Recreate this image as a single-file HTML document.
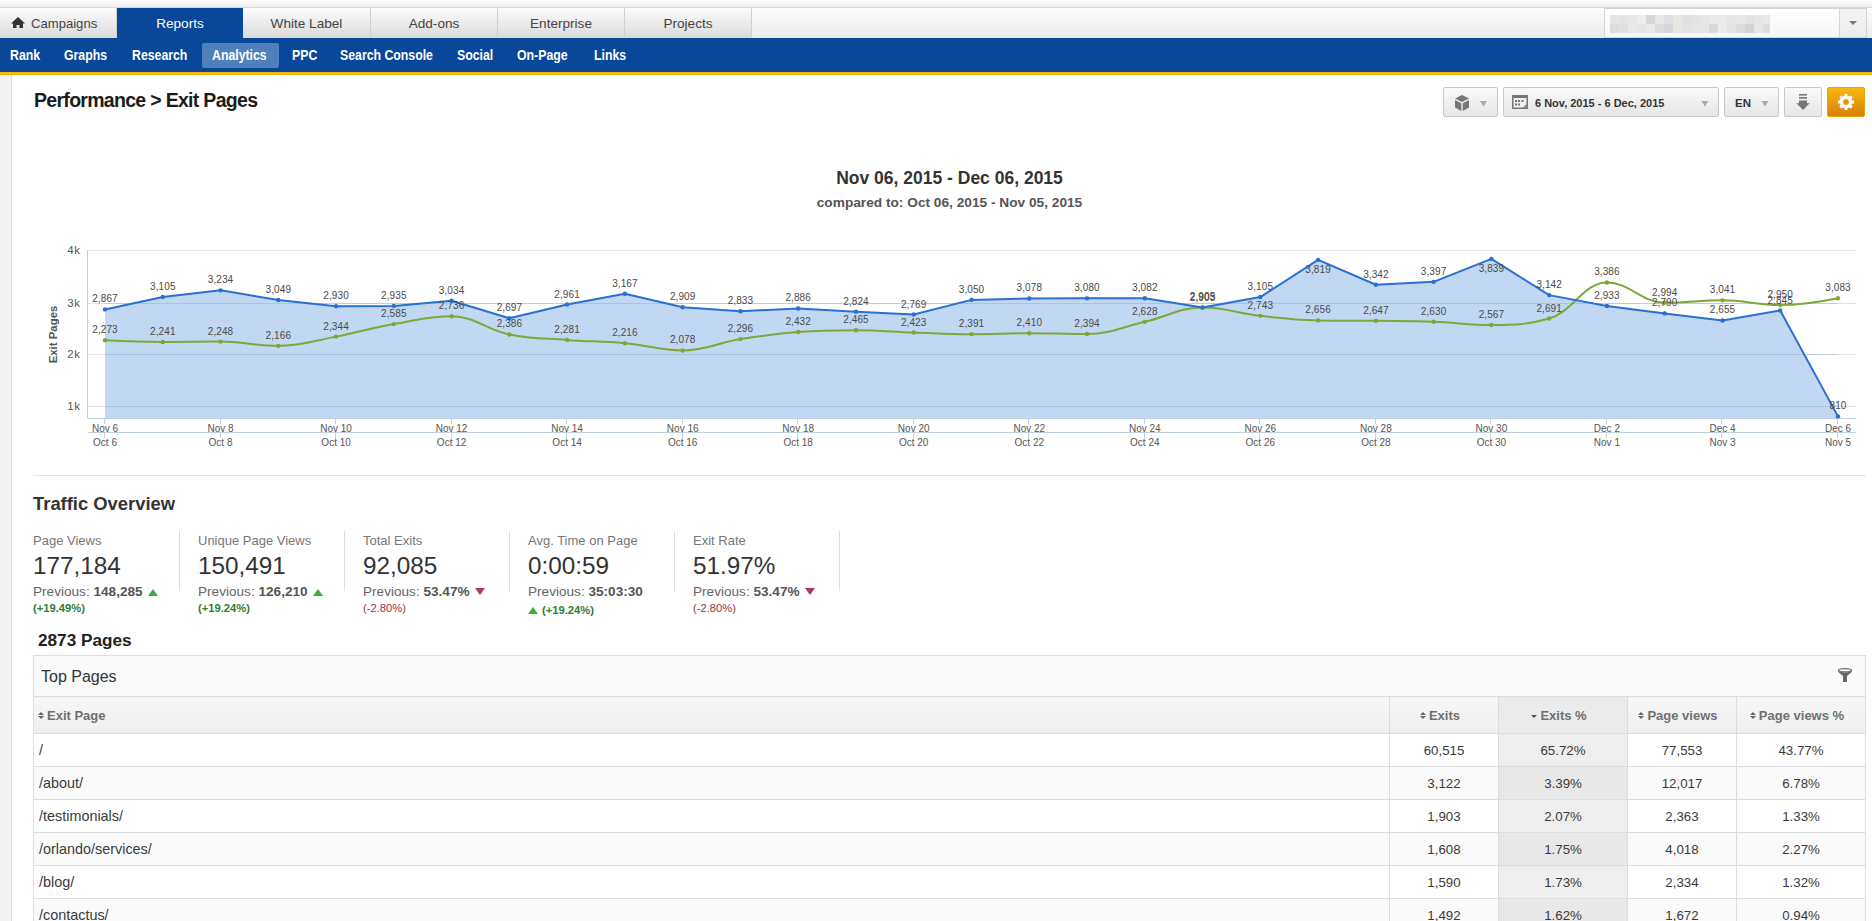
<!DOCTYPE html>
<html><head><meta charset="utf-8">
<style>
*{box-sizing:border-box;margin:0;padding:0}
html,body{width:1872px;height:921px;overflow:hidden;background:#fff;font-family:"Liberation Sans",sans-serif;position:relative}
.abs{position:absolute}
#topstrip{left:0;top:0;width:1872px;height:8px;background:linear-gradient(#fdfdfd,#ededed);border-bottom:1px solid #dcdcdc}
.tab{position:absolute;top:8px;height:30px;background:linear-gradient(#fdfdfd,#dadada);border-right:1px solid #d0d0d0;color:#444;font-size:13.6px;line-height:31px;text-align:center}
.tab.on{background:#084799;color:#fff;border-right:none}
#rightstrip{left:751px;top:8px;width:1121px;height:30px;background:linear-gradient(#fdfdfd,#ebebeb)}
#nav{left:0;top:38px;width:1872px;height:34px;background:#084799}
#yel{left:0;top:72px;width:1872px;height:3px;background:#f7b50d}
.sn{position:absolute;top:43px;height:24px;line-height:24px;color:#fff;font-size:15px;font-weight:bold;transform:scaleX(0.82);transform-origin:0 0;white-space:nowrap}
#leftpanel{left:0;top:75px;width:12px;height:846px;background:#f2f2f2;border-right:1px solid #dcdcdc}
.btn{position:absolute;top:87px;height:30px;border:1px solid #c8c8c8;border-radius:2px;background:linear-gradient(#fafafa,#e6e6e6)}
.stat{position:absolute;top:530px;width:165px}
.stat .l{position:absolute;left:0;top:3px;font-size:13px;color:#777;white-space:nowrap}
.stat .v{position:absolute;left:0;top:22px;font-size:24.3px;color:#333;white-space:nowrap}
.stat .p{position:absolute;left:0;top:54px;font-size:13.6px;color:#666;white-space:nowrap}
.stat .p b{color:#555}
.stat .c{position:absolute;left:0;top:72px;font-size:11.2px;white-space:nowrap}
.vsep{position:absolute;top:531px;width:1px;height:60px;background:#ddd}
.up{display:inline-block;width:0;height:0;border-left:5px solid transparent;border-right:5px solid transparent;border-bottom:7px solid #3aae3a;margin-left:5px;vertical-align:0px}
.dn{display:inline-block;width:0;height:0;border-left:5px solid transparent;border-right:5px solid transparent;border-top:7px solid #b03858;margin-left:5px;vertical-align:1px}
table{position:absolute;left:33px;top:696px;border-collapse:collapse;font-size:13.3px;color:#3a3a3a}
td,th{border:1px solid #ddd;height:33px;padding:0;text-align:center}
th{height:37px;background:linear-gradient(#f7f7f7,#efefef);color:#707070;font-weight:bold;font-size:13px;padding-right:8px}
td.l,th.l{text-align:left;padding-left:5px;padding-right:0}
td.l{font-size:14.4px}
td.s{background:#eee}
tr:nth-child(odd) td{background:#fafafa}
tr:nth-child(odd) td.s{background:#e8e8e8}
th.s{background:#ebebeb}
.caret{display:inline-block;width:0;height:0;border-left:3.5px solid transparent;border-right:3.5px solid transparent;border-top:3.5px solid #555;margin-right:3px;vertical-align:2px}
.sort{display:inline-block;position:relative;width:6px;height:8px;margin-right:3px;vertical-align:0px}
.sort:before{content:"";position:absolute;left:0;top:0;border-left:3px solid transparent;border-right:3px solid transparent;border-bottom:3.5px solid #666}
.sort:after{content:"";position:absolute;left:0;top:4.5px;border-left:3px solid transparent;border-right:3px solid transparent;border-top:3.5px solid #666}
</style></head><body>
<div id="topstrip" class="abs"></div>
<div id="rightstrip" class="abs"></div>
<div class="tab" style="left:0;width:117px"><span style="position:absolute;left:11px;top:9px;width:14px;height:12px;line-height:0">
<svg style="display:block" width="14" height="12" viewBox="0 0 14 12"><path d="M7 0 L14 6.5 L12 6.5 L12 11 L8.5 11 L8.5 8 L5.5 8 L5.5 11 L2 11 L2 6.5 L0 6.5 Z" fill="#333"/></svg></span><span style="position:absolute;left:31px;font-size:13.1px">Campaigns</span></div>
<div class="tab on" style="left:117px;width:126px">Reports</div>
<div class="tab" style="left:243px;width:128px">White Label</div>
<div class="tab" style="left:371px;width:127px">Add-ons</div>
<div class="tab" style="left:498px;width:127px">Enterprise</div>
<div class="tab" style="left:625px;width:127px">Projects</div>
<div class="abs" style="left:1604px;top:8px;width:263px;height:30px;border:1px solid #d4d4d4;background:linear-gradient(#fff,#f6f6f6)"></div>
<div class="abs" style="left:1839px;top:9px;width:27px;height:28px;border-left:1px solid #d8d8d8;background:linear-gradient(#f4f4f4,#ececec)"></div>
<div class="abs" style="left:1849px;top:21px;width:0;height:0;border-left:4px solid transparent;border-right:4px solid transparent;border-top:4px solid #777"></div>
<svg class="abs" style="left:1610px;top:15px" width="160" height="18" viewBox="1610 15 160 18"><rect x="1610" y="15" width="9" height="9" fill="#e6e6e4"/><rect x="1610" y="24" width="9" height="9" fill="#dcdcdc"/><rect x="1619" y="15" width="9" height="9" fill="#e3e3e3"/><rect x="1619" y="24" width="9" height="9" fill="#e0e0e2"/><rect x="1628" y="15" width="9" height="9" fill="#e6e6e6"/><rect x="1628" y="24" width="9" height="9" fill="#e8e8e8"/><rect x="1637" y="15" width="9" height="9" fill="#ebecee"/><rect x="1637" y="24" width="9" height="9" fill="#e4e5e7"/><rect x="1646" y="15" width="9" height="9" fill="#d6d6d6"/><rect x="1646" y="24" width="9" height="9" fill="#e8e8e8"/><rect x="1655" y="15" width="9" height="9" fill="#e9e7e4"/><rect x="1655" y="24" width="9" height="9" fill="#dcdcda"/><rect x="1664" y="15" width="9" height="9" fill="#dfdee3"/><rect x="1664" y="24" width="9" height="9" fill="#d6d7db"/><rect x="1673" y="15" width="9" height="9" fill="#e7e6e3"/><rect x="1673" y="24" width="9" height="9" fill="#e6e5e3"/><rect x="1682" y="15" width="9" height="9" fill="#dfdfdd"/><rect x="1682" y="24" width="9" height="9" fill="#e3e2e0"/><rect x="1691" y="15" width="9" height="9" fill="#e2e3e1"/><rect x="1691" y="24" width="9" height="9" fill="#e3e4e6"/><rect x="1700" y="15" width="9" height="9" fill="#e6e5e3"/><rect x="1700" y="24" width="9" height="9" fill="#e6e5e3"/><rect x="1709" y="15" width="9" height="9" fill="#e9e9e9"/><rect x="1709" y="24" width="9" height="9" fill="#d9d9d9"/><rect x="1718" y="15" width="9" height="9" fill="#e9eaec"/><rect x="1718" y="24" width="9" height="9" fill="#eceeed"/><rect x="1727" y="15" width="9" height="9" fill="#e5e5e6"/><rect x="1727" y="24" width="9" height="9" fill="#e2e3e5"/><rect x="1736" y="15" width="9" height="9" fill="#e8e8e8"/><rect x="1736" y="24" width="9" height="9" fill="#dddcd8"/><rect x="1745" y="15" width="9" height="9" fill="#e2e2e2"/><rect x="1745" y="24" width="9" height="9" fill="#d1d3d6"/><rect x="1754" y="15" width="9" height="9" fill="#e5e5e3"/><rect x="1754" y="24" width="9" height="9" fill="#e7e5e6"/><rect x="1763" y="15" width="7" height="9" fill="#e7e8ea"/><rect x="1763" y="24" width="7" height="9" fill="#dbdcde"/></svg>
<div id="nav" class="abs"></div>
<div class="abs" style="left:202px;top:43px;width:77px;height:25px;background:#5080bb;border-radius:2px"></div>
<div class="sn" style="left:10px">Rank</div>
<div class="sn" style="left:64px">Graphs</div>
<div class="sn" style="left:132px">Research</div>
<div class="sn" style="left:212px">Analytics</div>
<div class="sn" style="left:292px">PPC</div>
<div class="sn" style="left:340px">Search Console</div>
<div class="sn" style="left:457px">Social</div>
<div class="sn" style="left:517px">On-Page</div>
<div class="sn" style="left:594px">Links</div>
<div id="yel" class="abs"></div>
<div id="leftpanel" class="abs"></div>

<div class="abs" style="left:34px;top:89px;font-size:19.5px;letter-spacing:-0.7px;font-weight:bold;color:#1c1c1c;white-space:nowrap">Performance &gt; Exit Pages</div>

<div class="btn" style="left:1443px;width:55px"></div>
<div class="btn" style="left:1503px;width:216px"></div>
<div class="btn" style="left:1724px;width:55px"></div>
<div class="btn" style="left:1784px;width:38px"></div>
<div class="btn" style="left:1827px;width:38px;border-color:#e8a400;background:linear-gradient(#f8b80e,#d8800a)"></div>
<svg class="abs" style="left:1440px;top:84px" width="432" height="36" viewBox="1440 84 432 36">
<path d="M1462 95 L1469 98.5 L1462 102 L1455 98.5 Z" fill="#777"/>
<path d="M1455 100 L1461.3 103.3 L1461.3 111 L1455 107.5 Z" fill="#777"/>
<path d="M1469 100 L1462.7 103.3 L1462.7 111 L1469 107.5 Z" fill="#777"/>
<path d="M1480 101 L1487 101 L1483.5 106.5 Z" fill="#aaa"/>
<rect x="1512" y="95" width="16" height="14" fill="#777"/>
<rect x="1513.5" y="98" width="13" height="9.5" fill="#f0f0f0"/>
<rect x="1515" y="100" width="2" height="2" fill="#777"/><rect x="1518" y="100" width="2" height="2" fill="#777"/><rect x="1521.5" y="100" width="2" height="2" fill="#777"/>
<rect x="1515" y="103.5" width="2" height="2" fill="#777"/><rect x="1518" y="103.5" width="2" height="2" fill="#777"/>
<path d="M1523 107.5 L1526.5 104 L1526.5 107.5 Z" fill="#777"/>
<path d="M1701.5 101 L1708.5 101 L1705 106.5 Z" fill="#aaa"/>
<path d="M1761.5 101 L1768.5 101 L1765 106.5 Z" fill="#aaa"/>
<rect x="1799" y="94" width="8" height="1.6" fill="#777"/>
<rect x="1799" y="97.1" width="8" height="1.6" fill="#777"/>
<path d="M1799 100.5 L1807 100.5 L1807 103.2 L1809.7 103.2 L1803 110 L1796.3 103.2 L1799 103.2 Z" fill="#777"/>
<g transform="translate(1846 102)" fill="#fff">
<circle r="6.3"/>
<g id="teeth"><rect x="-1.5" y="-8" width="3" height="3.5"/><rect x="-1.5" y="4.5" width="3" height="3.5"/><rect x="-8" y="-1.5" width="3.5" height="3"/><rect x="4.5" y="-1.5" width="3.5" height="3"/></g>
<g transform="rotate(45)"><rect x="-1.5" y="-8" width="3" height="3.5"/><rect x="-1.5" y="4.5" width="3" height="3.5"/><rect x="-8" y="-1.5" width="3.5" height="3"/><rect x="4.5" y="-1.5" width="3.5" height="3"/></g>
<circle r="2.9" fill="#e49a08"/>
</g>
</svg>
<div class="abs" style="left:1535px;top:97px;font-size:11px;font-weight:bold;color:#333;white-space:nowrap">6 Nov, 2015 - 6 Dec, 2015</div>
<div class="abs" style="left:1735px;top:97px;font-size:11.5px;font-weight:bold;color:#333">EN</div>

<div class="abs" style="left:0;top:168px;width:1899px;text-align:center;font-size:17.5px;font-weight:bold;color:#333">Nov 06, 2015 - Dec 06, 2015</div>
<div class="abs" style="left:0;top:195px;width:1899px;text-align:center;font-size:13.7px;font-weight:bold;color:#555">compared to: Oct 06, 2015 - Nov 05, 2015</div>

<svg width="1872" height="921" style="position:absolute;left:0;top:0">
<line x1="88" y1="250.5" x2="1856" y2="250.5" stroke="#e2e2e2" stroke-width="1"/>
<line x1="88" y1="303.5" x2="1856" y2="303.5" stroke="#e2e2e2" stroke-width="1"/>
<line x1="88" y1="354.5" x2="1856" y2="354.5" stroke="#e2e2e2" stroke-width="1"/>
<line x1="88" y1="406.5" x2="1856" y2="406.5" stroke="#e2e2e2" stroke-width="1"/>
<path d="M 105.00 418 L 105.00 309.42 L 162.77 297.04 L 220.53 290.33 L 278.30 299.95 L 336.07 306.14 L 393.83 305.88 L 451.60 300.73 L 509.37 318.26 L 567.13 304.53 L 624.90 293.82 L 682.67 307.23 L 740.43 311.18 L 798.20 308.43 L 855.97 311.65 L 913.73 314.51 L 971.50 299.90 L 1029.27 298.44 L 1087.03 298.34 L 1144.80 298.24 L 1202.57 307.44 L 1260.33 297.04 L 1318.10 259.91 L 1375.87 284.72 L 1433.63 281.86 L 1491.40 258.87 L 1549.17 295.12 L 1606.93 305.98 L 1664.70 313.42 L 1722.47 320.44 L 1780.23 310.56 L 1838.00 416.38 L 1838.00 418 Z" fill="#a8c8ec" fill-opacity="0.7"/>
<line x1="105" y1="303.5" x2="1838" y2="303.5" stroke="#9bb3cf" stroke-width="1" stroke-opacity="0.45"/>
<line x1="105" y1="354.5" x2="1838" y2="354.5" stroke="#9bb3cf" stroke-width="1" stroke-opacity="0.45"/>
<line x1="105" y1="406.5" x2="1838" y2="406.5" stroke="#9bb3cf" stroke-width="1" stroke-opacity="0.45"/>
<line x1="87.5" y1="250" x2="87.5" y2="418.5" stroke="#c0d0e0" stroke-width="1"/>
<line x1="88" y1="418.5" x2="1856" y2="418.5" stroke="#c0d0e0" stroke-width="1"/>
<line x1="88" y1="432.5" x2="1856" y2="432.5" stroke="#c0d0e0" stroke-width="1"/>
<line x1="104.5" y1="419" x2="104.5" y2="424" stroke="#c0d0e0"/>
<line x1="104.5" y1="433" x2="104.5" y2="438" stroke="#c0d0e0"/>
<line x1="220.5" y1="419" x2="220.5" y2="424" stroke="#c0d0e0"/>
<line x1="220.5" y1="433" x2="220.5" y2="438" stroke="#c0d0e0"/>
<line x1="335.5" y1="419" x2="335.5" y2="424" stroke="#c0d0e0"/>
<line x1="335.5" y1="433" x2="335.5" y2="438" stroke="#c0d0e0"/>
<line x1="451.5" y1="419" x2="451.5" y2="424" stroke="#c0d0e0"/>
<line x1="451.5" y1="433" x2="451.5" y2="438" stroke="#c0d0e0"/>
<line x1="566.5" y1="419" x2="566.5" y2="424" stroke="#c0d0e0"/>
<line x1="566.5" y1="433" x2="566.5" y2="438" stroke="#c0d0e0"/>
<line x1="682.5" y1="419" x2="682.5" y2="424" stroke="#c0d0e0"/>
<line x1="682.5" y1="433" x2="682.5" y2="438" stroke="#c0d0e0"/>
<line x1="797.5" y1="419" x2="797.5" y2="424" stroke="#c0d0e0"/>
<line x1="797.5" y1="433" x2="797.5" y2="438" stroke="#c0d0e0"/>
<line x1="913.5" y1="419" x2="913.5" y2="424" stroke="#c0d0e0"/>
<line x1="913.5" y1="433" x2="913.5" y2="438" stroke="#c0d0e0"/>
<line x1="1028.5" y1="419" x2="1028.5" y2="424" stroke="#c0d0e0"/>
<line x1="1028.5" y1="433" x2="1028.5" y2="438" stroke="#c0d0e0"/>
<line x1="1144.5" y1="419" x2="1144.5" y2="424" stroke="#c0d0e0"/>
<line x1="1144.5" y1="433" x2="1144.5" y2="438" stroke="#c0d0e0"/>
<line x1="1259.5" y1="419" x2="1259.5" y2="424" stroke="#c0d0e0"/>
<line x1="1259.5" y1="433" x2="1259.5" y2="438" stroke="#c0d0e0"/>
<line x1="1375.5" y1="419" x2="1375.5" y2="424" stroke="#c0d0e0"/>
<line x1="1375.5" y1="433" x2="1375.5" y2="438" stroke="#c0d0e0"/>
<line x1="1490.5" y1="419" x2="1490.5" y2="424" stroke="#c0d0e0"/>
<line x1="1490.5" y1="433" x2="1490.5" y2="438" stroke="#c0d0e0"/>
<line x1="1606.5" y1="419" x2="1606.5" y2="424" stroke="#c0d0e0"/>
<line x1="1606.5" y1="433" x2="1606.5" y2="438" stroke="#c0d0e0"/>
<line x1="1721.5" y1="419" x2="1721.5" y2="424" stroke="#c0d0e0"/>
<line x1="1721.5" y1="433" x2="1721.5" y2="438" stroke="#c0d0e0"/>
<line x1="1837.5" y1="419" x2="1837.5" y2="424" stroke="#c0d0e0"/>
<line x1="1837.5" y1="433" x2="1837.5" y2="438" stroke="#c0d0e0"/>
<path d="M 105.00 340.30 C 105.00 340.30 139.66 341.97 162.77 341.97 C 185.87 341.97 197.43 341.60 220.53 341.60 C 243.64 341.60 255.19 345.87 278.30 345.87 C 301.41 345.87 312.96 340.97 336.07 336.61 C 359.17 332.25 370.73 328.16 393.83 324.08 C 416.94 320.00 428.49 316.23 451.60 316.23 C 474.71 316.23 486.26 329.70 509.37 334.43 C 532.47 339.16 544.03 338.12 567.13 339.89 C 590.24 341.66 601.79 341.16 624.90 343.27 C 648.01 345.38 659.56 350.44 682.67 350.44 C 705.77 350.44 717.33 342.79 740.43 339.11 C 763.54 335.43 775.09 333.75 798.20 332.04 C 821.31 330.32 832.86 330.32 855.97 330.32 C 879.07 330.32 890.63 331.73 913.73 332.50 C 936.84 333.27 948.39 334.17 971.50 334.17 C 994.61 334.17 1006.16 333.18 1029.27 333.18 C 1052.37 333.18 1063.93 334.01 1087.03 334.01 C 1110.14 334.01 1121.69 327.14 1144.80 321.84 C 1167.91 316.55 1179.46 307.54 1202.57 307.54 C 1225.67 307.54 1237.23 313.30 1260.33 315.86 C 1283.44 318.43 1294.99 319.92 1318.10 320.39 C 1341.21 320.86 1352.76 320.59 1375.87 320.86 C 1398.97 321.13 1410.53 320.91 1433.63 321.74 C 1456.74 322.57 1468.29 325.02 1491.40 325.02 C 1514.51 325.02 1526.06 325.02 1549.17 318.57 C 1572.27 312.12 1583.83 282.43 1606.93 282.43 C 1630.04 282.43 1641.59 302.81 1664.70 302.81 C 1687.81 302.81 1699.36 300.37 1722.47 300.37 C 1745.57 300.37 1757.13 305.10 1780.23 305.10 C 1803.34 305.10 1838.00 298.18 1838.00 298.18" fill="none" stroke="#7ba83a" stroke-width="2"/>
<path d="M 105.00 309.42 L 162.77 297.04 L 220.53 290.33 L 278.30 299.95 L 336.07 306.14 L 393.83 305.88 L 451.60 300.73 L 509.37 318.26 L 567.13 304.53 L 624.90 293.82 L 682.67 307.23 L 740.43 311.18 L 798.20 308.43 L 855.97 311.65 L 913.73 314.51 L 971.50 299.90 L 1029.27 298.44 L 1087.03 298.34 L 1144.80 298.24 L 1202.57 307.44 L 1260.33 297.04 L 1318.10 259.91 L 1375.87 284.72 L 1433.63 281.86 L 1491.40 258.87 L 1549.17 295.12 L 1606.93 305.98 L 1664.70 313.42 L 1722.47 320.44 L 1780.23 310.56 L 1838.00 416.38" fill="none" stroke="#2870d2" stroke-width="2" stroke-linejoin="round"/>
<circle cx="105.00" cy="340.30" r="2.2" fill="#7ba83a"/>
<circle cx="162.77" cy="341.97" r="2.2" fill="#7ba83a"/>
<circle cx="220.53" cy="341.60" r="2.2" fill="#7ba83a"/>
<circle cx="278.30" cy="345.87" r="2.2" fill="#7ba83a"/>
<circle cx="336.07" cy="336.61" r="2.2" fill="#7ba83a"/>
<circle cx="393.83" cy="324.08" r="2.2" fill="#7ba83a"/>
<circle cx="451.60" cy="316.23" r="2.2" fill="#7ba83a"/>
<circle cx="509.37" cy="334.43" r="2.2" fill="#7ba83a"/>
<circle cx="567.13" cy="339.89" r="2.2" fill="#7ba83a"/>
<circle cx="624.90" cy="343.27" r="2.2" fill="#7ba83a"/>
<circle cx="682.67" cy="350.44" r="2.2" fill="#7ba83a"/>
<circle cx="740.43" cy="339.11" r="2.2" fill="#7ba83a"/>
<circle cx="798.20" cy="332.04" r="2.2" fill="#7ba83a"/>
<circle cx="855.97" cy="330.32" r="2.2" fill="#7ba83a"/>
<circle cx="913.73" cy="332.50" r="2.2" fill="#7ba83a"/>
<circle cx="971.50" cy="334.17" r="2.2" fill="#7ba83a"/>
<circle cx="1029.27" cy="333.18" r="2.2" fill="#7ba83a"/>
<circle cx="1087.03" cy="334.01" r="2.2" fill="#7ba83a"/>
<circle cx="1144.80" cy="321.84" r="2.2" fill="#7ba83a"/>
<circle cx="1202.57" cy="307.54" r="2.2" fill="#7ba83a"/>
<circle cx="1260.33" cy="315.86" r="2.2" fill="#7ba83a"/>
<circle cx="1318.10" cy="320.39" r="2.2" fill="#7ba83a"/>
<circle cx="1375.87" cy="320.86" r="2.2" fill="#7ba83a"/>
<circle cx="1433.63" cy="321.74" r="2.2" fill="#7ba83a"/>
<circle cx="1491.40" cy="325.02" r="2.2" fill="#7ba83a"/>
<circle cx="1549.17" cy="318.57" r="2.2" fill="#7ba83a"/>
<circle cx="1606.93" cy="282.43" r="2.2" fill="#7ba83a"/>
<circle cx="1664.70" cy="302.81" r="2.2" fill="#7ba83a"/>
<circle cx="1722.47" cy="300.37" r="2.2" fill="#7ba83a"/>
<circle cx="1780.23" cy="305.10" r="2.2" fill="#7ba83a"/>
<circle cx="1838.00" cy="298.18" r="2.2" fill="#7ba83a"/>
<circle cx="105.00" cy="309.42" r="2.2" fill="#2870d2"/>
<circle cx="162.77" cy="297.04" r="2.2" fill="#2870d2"/>
<circle cx="220.53" cy="290.33" r="2.2" fill="#2870d2"/>
<circle cx="278.30" cy="299.95" r="2.2" fill="#2870d2"/>
<circle cx="336.07" cy="306.14" r="2.2" fill="#2870d2"/>
<circle cx="393.83" cy="305.88" r="2.2" fill="#2870d2"/>
<circle cx="451.60" cy="300.73" r="2.2" fill="#2870d2"/>
<circle cx="509.37" cy="318.26" r="2.2" fill="#2870d2"/>
<circle cx="567.13" cy="304.53" r="2.2" fill="#2870d2"/>
<circle cx="624.90" cy="293.82" r="2.2" fill="#2870d2"/>
<circle cx="682.67" cy="307.23" r="2.2" fill="#2870d2"/>
<circle cx="740.43" cy="311.18" r="2.2" fill="#2870d2"/>
<circle cx="798.20" cy="308.43" r="2.2" fill="#2870d2"/>
<circle cx="855.97" cy="311.65" r="2.2" fill="#2870d2"/>
<circle cx="913.73" cy="314.51" r="2.2" fill="#2870d2"/>
<circle cx="971.50" cy="299.90" r="2.2" fill="#2870d2"/>
<circle cx="1029.27" cy="298.44" r="2.2" fill="#2870d2"/>
<circle cx="1087.03" cy="298.34" r="2.2" fill="#2870d2"/>
<circle cx="1144.80" cy="298.24" r="2.2" fill="#2870d2"/>
<circle cx="1202.57" cy="307.44" r="2.2" fill="#2870d2"/>
<circle cx="1260.33" cy="297.04" r="2.2" fill="#2870d2"/>
<circle cx="1318.10" cy="259.91" r="2.2" fill="#2870d2"/>
<circle cx="1375.87" cy="284.72" r="2.2" fill="#2870d2"/>
<circle cx="1433.63" cy="281.86" r="2.2" fill="#2870d2"/>
<circle cx="1491.40" cy="258.87" r="2.2" fill="#2870d2"/>
<circle cx="1549.17" cy="295.12" r="2.2" fill="#2870d2"/>
<circle cx="1606.93" cy="305.98" r="2.2" fill="#2870d2"/>
<circle cx="1664.70" cy="313.42" r="2.2" fill="#2870d2"/>
<circle cx="1722.47" cy="320.44" r="2.2" fill="#2870d2"/>
<circle cx="1780.23" cy="310.56" r="2.2" fill="#2870d2"/>
<circle cx="1838.00" cy="416.38" r="2.2" fill="#2870d2"/>
<text x="105.0" y="333.3" font-family="Liberation Sans, sans-serif" font-size="10" letter-spacing="0.1" fill="#4a4a4a" text-anchor="middle">2,273</text>
<text x="162.8" y="335.0" font-family="Liberation Sans, sans-serif" font-size="10" letter-spacing="0.1" fill="#4a4a4a" text-anchor="middle">2,241</text>
<text x="220.5" y="334.6" font-family="Liberation Sans, sans-serif" font-size="10" letter-spacing="0.1" fill="#4a4a4a" text-anchor="middle">2,248</text>
<text x="278.3" y="338.9" font-family="Liberation Sans, sans-serif" font-size="10" letter-spacing="0.1" fill="#4a4a4a" text-anchor="middle">2,166</text>
<text x="336.1" y="329.6" font-family="Liberation Sans, sans-serif" font-size="10" letter-spacing="0.1" fill="#4a4a4a" text-anchor="middle">2,344</text>
<text x="393.8" y="317.1" font-family="Liberation Sans, sans-serif" font-size="10" letter-spacing="0.1" fill="#4a4a4a" text-anchor="middle">2,585</text>
<text x="451.6" y="309.2" font-family="Liberation Sans, sans-serif" font-size="10" letter-spacing="0.1" fill="#4a4a4a" text-anchor="middle">2,736</text>
<text x="509.4" y="327.4" font-family="Liberation Sans, sans-serif" font-size="10" letter-spacing="0.1" fill="#4a4a4a" text-anchor="middle">2,386</text>
<text x="567.1" y="332.9" font-family="Liberation Sans, sans-serif" font-size="10" letter-spacing="0.1" fill="#4a4a4a" text-anchor="middle">2,281</text>
<text x="624.9" y="336.3" font-family="Liberation Sans, sans-serif" font-size="10" letter-spacing="0.1" fill="#4a4a4a" text-anchor="middle">2,216</text>
<text x="682.7" y="343.4" font-family="Liberation Sans, sans-serif" font-size="10" letter-spacing="0.1" fill="#4a4a4a" text-anchor="middle">2,078</text>
<text x="740.4" y="332.1" font-family="Liberation Sans, sans-serif" font-size="10" letter-spacing="0.1" fill="#4a4a4a" text-anchor="middle">2,296</text>
<text x="798.2" y="325.0" font-family="Liberation Sans, sans-serif" font-size="10" letter-spacing="0.1" fill="#4a4a4a" text-anchor="middle">2,432</text>
<text x="856.0" y="323.3" font-family="Liberation Sans, sans-serif" font-size="10" letter-spacing="0.1" fill="#4a4a4a" text-anchor="middle">2,465</text>
<text x="913.7" y="325.5" font-family="Liberation Sans, sans-serif" font-size="10" letter-spacing="0.1" fill="#4a4a4a" text-anchor="middle">2,423</text>
<text x="971.5" y="327.2" font-family="Liberation Sans, sans-serif" font-size="10" letter-spacing="0.1" fill="#4a4a4a" text-anchor="middle">2,391</text>
<text x="1029.3" y="326.2" font-family="Liberation Sans, sans-serif" font-size="10" letter-spacing="0.1" fill="#4a4a4a" text-anchor="middle">2,410</text>
<text x="1087.0" y="327.0" font-family="Liberation Sans, sans-serif" font-size="10" letter-spacing="0.1" fill="#4a4a4a" text-anchor="middle">2,394</text>
<text x="1144.8" y="314.8" font-family="Liberation Sans, sans-serif" font-size="10" letter-spacing="0.1" fill="#4a4a4a" text-anchor="middle">2,628</text>
<text x="1202.6" y="300.5" font-family="Liberation Sans, sans-serif" font-size="10" letter-spacing="0.1" fill="#4a4a4a" text-anchor="middle">2,903</text>
<text x="1260.3" y="308.9" font-family="Liberation Sans, sans-serif" font-size="10" letter-spacing="0.1" fill="#4a4a4a" text-anchor="middle">2,743</text>
<text x="1318.1" y="313.4" font-family="Liberation Sans, sans-serif" font-size="10" letter-spacing="0.1" fill="#4a4a4a" text-anchor="middle">2,656</text>
<text x="1375.9" y="313.9" font-family="Liberation Sans, sans-serif" font-size="10" letter-spacing="0.1" fill="#4a4a4a" text-anchor="middle">2,647</text>
<text x="1433.6" y="314.7" font-family="Liberation Sans, sans-serif" font-size="10" letter-spacing="0.1" fill="#4a4a4a" text-anchor="middle">2,630</text>
<text x="1491.4" y="318.0" font-family="Liberation Sans, sans-serif" font-size="10" letter-spacing="0.1" fill="#4a4a4a" text-anchor="middle">2,567</text>
<text x="1549.2" y="311.6" font-family="Liberation Sans, sans-serif" font-size="10" letter-spacing="0.1" fill="#4a4a4a" text-anchor="middle">2,691</text>
<text x="1606.9" y="275.4" font-family="Liberation Sans, sans-serif" font-size="10" letter-spacing="0.1" fill="#4a4a4a" text-anchor="middle">3,386</text>
<text x="1664.7" y="295.8" font-family="Liberation Sans, sans-serif" font-size="10" letter-spacing="0.1" fill="#4a4a4a" text-anchor="middle">2,994</text>
<text x="1722.5" y="293.4" font-family="Liberation Sans, sans-serif" font-size="10" letter-spacing="0.1" fill="#4a4a4a" text-anchor="middle">3,041</text>
<text x="1780.2" y="298.1" font-family="Liberation Sans, sans-serif" font-size="10" letter-spacing="0.1" fill="#4a4a4a" text-anchor="middle">2,950</text>
<text x="1838.0" y="291.2" font-family="Liberation Sans, sans-serif" font-size="10" letter-spacing="0.1" fill="#4a4a4a" text-anchor="middle">3,083</text>
<text x="105.0" y="302.4" font-family="Liberation Sans, sans-serif" font-size="10" letter-spacing="0.1" fill="#4a4a4a" text-anchor="middle">2,867</text>
<text x="162.8" y="290.0" font-family="Liberation Sans, sans-serif" font-size="10" letter-spacing="0.1" fill="#4a4a4a" text-anchor="middle">3,105</text>
<text x="220.5" y="283.3" font-family="Liberation Sans, sans-serif" font-size="10" letter-spacing="0.1" fill="#4a4a4a" text-anchor="middle">3,234</text>
<text x="278.3" y="293.0" font-family="Liberation Sans, sans-serif" font-size="10" letter-spacing="0.1" fill="#4a4a4a" text-anchor="middle">3,049</text>
<text x="336.1" y="299.1" font-family="Liberation Sans, sans-serif" font-size="10" letter-spacing="0.1" fill="#4a4a4a" text-anchor="middle">2,930</text>
<text x="393.8" y="298.9" font-family="Liberation Sans, sans-serif" font-size="10" letter-spacing="0.1" fill="#4a4a4a" text-anchor="middle">2,935</text>
<text x="451.6" y="293.7" font-family="Liberation Sans, sans-serif" font-size="10" letter-spacing="0.1" fill="#4a4a4a" text-anchor="middle">3,034</text>
<text x="509.4" y="311.3" font-family="Liberation Sans, sans-serif" font-size="10" letter-spacing="0.1" fill="#4a4a4a" text-anchor="middle">2,697</text>
<text x="567.1" y="297.5" font-family="Liberation Sans, sans-serif" font-size="10" letter-spacing="0.1" fill="#4a4a4a" text-anchor="middle">2,961</text>
<text x="624.9" y="286.8" font-family="Liberation Sans, sans-serif" font-size="10" letter-spacing="0.1" fill="#4a4a4a" text-anchor="middle">3,167</text>
<text x="682.7" y="300.2" font-family="Liberation Sans, sans-serif" font-size="10" letter-spacing="0.1" fill="#4a4a4a" text-anchor="middle">2,909</text>
<text x="740.4" y="304.2" font-family="Liberation Sans, sans-serif" font-size="10" letter-spacing="0.1" fill="#4a4a4a" text-anchor="middle">2,833</text>
<text x="798.2" y="301.4" font-family="Liberation Sans, sans-serif" font-size="10" letter-spacing="0.1" fill="#4a4a4a" text-anchor="middle">2,886</text>
<text x="856.0" y="304.7" font-family="Liberation Sans, sans-serif" font-size="10" letter-spacing="0.1" fill="#4a4a4a" text-anchor="middle">2,824</text>
<text x="913.7" y="307.5" font-family="Liberation Sans, sans-serif" font-size="10" letter-spacing="0.1" fill="#4a4a4a" text-anchor="middle">2,769</text>
<text x="971.5" y="292.9" font-family="Liberation Sans, sans-serif" font-size="10" letter-spacing="0.1" fill="#4a4a4a" text-anchor="middle">3,050</text>
<text x="1029.3" y="291.4" font-family="Liberation Sans, sans-serif" font-size="10" letter-spacing="0.1" fill="#4a4a4a" text-anchor="middle">3,078</text>
<text x="1087.0" y="291.3" font-family="Liberation Sans, sans-serif" font-size="10" letter-spacing="0.1" fill="#4a4a4a" text-anchor="middle">3,080</text>
<text x="1144.8" y="291.2" font-family="Liberation Sans, sans-serif" font-size="10" letter-spacing="0.1" fill="#4a4a4a" text-anchor="middle">3,082</text>
<text x="1202.6" y="300.4" font-family="Liberation Sans, sans-serif" font-size="10" letter-spacing="0.1" fill="#4a4a4a" text-anchor="middle">2,905</text>
<text x="1260.3" y="290.0" font-family="Liberation Sans, sans-serif" font-size="10" letter-spacing="0.1" fill="#4a4a4a" text-anchor="middle">3,105</text>
<text x="1318.1" y="272.9" font-family="Liberation Sans, sans-serif" font-size="10" letter-spacing="0.1" fill="#4a4a4a" text-anchor="middle">3,819</text>
<text x="1375.9" y="277.7" font-family="Liberation Sans, sans-serif" font-size="10" letter-spacing="0.1" fill="#4a4a4a" text-anchor="middle">3,342</text>
<text x="1433.6" y="274.9" font-family="Liberation Sans, sans-serif" font-size="10" letter-spacing="0.1" fill="#4a4a4a" text-anchor="middle">3,397</text>
<text x="1491.4" y="271.9" font-family="Liberation Sans, sans-serif" font-size="10" letter-spacing="0.1" fill="#4a4a4a" text-anchor="middle">3,839</text>
<text x="1549.2" y="288.1" font-family="Liberation Sans, sans-serif" font-size="10" letter-spacing="0.1" fill="#4a4a4a" text-anchor="middle">3,142</text>
<text x="1606.9" y="299.0" font-family="Liberation Sans, sans-serif" font-size="10" letter-spacing="0.1" fill="#4a4a4a" text-anchor="middle">2,933</text>
<text x="1664.7" y="306.4" font-family="Liberation Sans, sans-serif" font-size="10" letter-spacing="0.1" fill="#4a4a4a" text-anchor="middle">2,790</text>
<text x="1722.5" y="313.4" font-family="Liberation Sans, sans-serif" font-size="10" letter-spacing="0.1" fill="#4a4a4a" text-anchor="middle">2,655</text>
<text x="1780.2" y="303.6" font-family="Liberation Sans, sans-serif" font-size="10" letter-spacing="0.1" fill="#4a4a4a" text-anchor="middle">2,845</text>
<text x="1838.0" y="409.4" font-family="Liberation Sans, sans-serif" font-size="10" letter-spacing="0.1" fill="#4a4a4a" text-anchor="middle">810</text>
<text x="80.5" y="253.5" font-family="Liberation Sans, sans-serif" font-size="11.5" fill="#555" text-anchor="end" letter-spacing="0.5">4k</text>
<text x="80.5" y="306.5" font-family="Liberation Sans, sans-serif" font-size="11.5" fill="#555" text-anchor="end" letter-spacing="0.5">3k</text>
<text x="80.5" y="357.5" font-family="Liberation Sans, sans-serif" font-size="11.5" fill="#555" text-anchor="end" letter-spacing="0.5">2k</text>
<text x="80.5" y="409.5" font-family="Liberation Sans, sans-serif" font-size="11.5" fill="#555" text-anchor="end" letter-spacing="0.5">1k</text>
<text transform="translate(57,334.5) rotate(-90)" font-family="Liberation Sans, sans-serif" font-size="11.4" font-weight="bold" fill="#555" text-anchor="middle">Exit Pages</text>
<text x="105.0" y="432" font-family="Liberation Sans, sans-serif" font-size="10" fill="#555" text-anchor="middle">Nov 6</text>
<text x="105.0" y="446" font-family="Liberation Sans, sans-serif" font-size="10" fill="#555" text-anchor="middle">Oct 6</text>
<text x="220.5" y="432" font-family="Liberation Sans, sans-serif" font-size="10" fill="#555" text-anchor="middle">Nov 8</text>
<text x="220.5" y="446" font-family="Liberation Sans, sans-serif" font-size="10" fill="#555" text-anchor="middle">Oct 8</text>
<text x="336.1" y="432" font-family="Liberation Sans, sans-serif" font-size="10" fill="#555" text-anchor="middle">Nov 10</text>
<text x="336.1" y="446" font-family="Liberation Sans, sans-serif" font-size="10" fill="#555" text-anchor="middle">Oct 10</text>
<text x="451.6" y="432" font-family="Liberation Sans, sans-serif" font-size="10" fill="#555" text-anchor="middle">Nov 12</text>
<text x="451.6" y="446" font-family="Liberation Sans, sans-serif" font-size="10" fill="#555" text-anchor="middle">Oct 12</text>
<text x="567.1" y="432" font-family="Liberation Sans, sans-serif" font-size="10" fill="#555" text-anchor="middle">Nov 14</text>
<text x="567.1" y="446" font-family="Liberation Sans, sans-serif" font-size="10" fill="#555" text-anchor="middle">Oct 14</text>
<text x="682.7" y="432" font-family="Liberation Sans, sans-serif" font-size="10" fill="#555" text-anchor="middle">Nov 16</text>
<text x="682.7" y="446" font-family="Liberation Sans, sans-serif" font-size="10" fill="#555" text-anchor="middle">Oct 16</text>
<text x="798.2" y="432" font-family="Liberation Sans, sans-serif" font-size="10" fill="#555" text-anchor="middle">Nov 18</text>
<text x="798.2" y="446" font-family="Liberation Sans, sans-serif" font-size="10" fill="#555" text-anchor="middle">Oct 18</text>
<text x="913.7" y="432" font-family="Liberation Sans, sans-serif" font-size="10" fill="#555" text-anchor="middle">Nov 20</text>
<text x="913.7" y="446" font-family="Liberation Sans, sans-serif" font-size="10" fill="#555" text-anchor="middle">Oct 20</text>
<text x="1029.3" y="432" font-family="Liberation Sans, sans-serif" font-size="10" fill="#555" text-anchor="middle">Nov 22</text>
<text x="1029.3" y="446" font-family="Liberation Sans, sans-serif" font-size="10" fill="#555" text-anchor="middle">Oct 22</text>
<text x="1144.8" y="432" font-family="Liberation Sans, sans-serif" font-size="10" fill="#555" text-anchor="middle">Nov 24</text>
<text x="1144.8" y="446" font-family="Liberation Sans, sans-serif" font-size="10" fill="#555" text-anchor="middle">Oct 24</text>
<text x="1260.3" y="432" font-family="Liberation Sans, sans-serif" font-size="10" fill="#555" text-anchor="middle">Nov 26</text>
<text x="1260.3" y="446" font-family="Liberation Sans, sans-serif" font-size="10" fill="#555" text-anchor="middle">Oct 26</text>
<text x="1375.9" y="432" font-family="Liberation Sans, sans-serif" font-size="10" fill="#555" text-anchor="middle">Nov 28</text>
<text x="1375.9" y="446" font-family="Liberation Sans, sans-serif" font-size="10" fill="#555" text-anchor="middle">Oct 28</text>
<text x="1491.4" y="432" font-family="Liberation Sans, sans-serif" font-size="10" fill="#555" text-anchor="middle">Nov 30</text>
<text x="1491.4" y="446" font-family="Liberation Sans, sans-serif" font-size="10" fill="#555" text-anchor="middle">Oct 30</text>
<text x="1606.9" y="432" font-family="Liberation Sans, sans-serif" font-size="10" fill="#555" text-anchor="middle">Dec 2</text>
<text x="1606.9" y="446" font-family="Liberation Sans, sans-serif" font-size="10" fill="#555" text-anchor="middle">Nov 1</text>
<text x="1722.5" y="432" font-family="Liberation Sans, sans-serif" font-size="10" fill="#555" text-anchor="middle">Dec 4</text>
<text x="1722.5" y="446" font-family="Liberation Sans, sans-serif" font-size="10" fill="#555" text-anchor="middle">Nov 3</text>
<text x="1838.0" y="432" font-family="Liberation Sans, sans-serif" font-size="10" fill="#555" text-anchor="middle">Dec 6</text>
<text x="1838.0" y="446" font-family="Liberation Sans, sans-serif" font-size="10" fill="#555" text-anchor="middle">Nov 5</text>
</svg>

<div class="abs" style="left:33px;top:475px;width:1833px;height:1px;background:#e4e4e4"></div>
<div class="abs" style="left:33px;top:493px;font-size:18.4px;font-weight:bold;color:#333">Traffic Overview</div>

<div class="stat" style="left:33px"><div class="l">Page Views</div><div class="v">177,184</div><div class="p">Previous: <b>148,285</b><span class="up"></span></div><div class="c" style="color:#2e7d32;font-weight:bold">(+19.49%)</div></div>
<div class="vsep" style="left:179px"></div>
<div class="stat" style="left:198px"><div class="l">Unique Page Views</div><div class="v">150,491</div><div class="p">Previous: <b>126,210</b><span class="up"></span></div><div class="c" style="color:#2e7d32;font-weight:bold">(+19.24%)</div></div>
<div class="vsep" style="left:344px"></div>
<div class="stat" style="left:363px"><div class="l">Total Exits</div><div class="v">92,085</div><div class="p">Previous: <b>53.47%</b><span class="dn"></span></div><div class="c" style="color:#a03048">(-2.80%)</div></div>
<div class="vsep" style="left:509px"></div>
<div class="stat" style="left:528px"><div class="l">Avg. Time on Page</div><div class="v">0:00:59</div><div class="p">Previous: <b>35:03:30</b></div><div class="c" style="color:#2e7d32;font-weight:bold;top:74px"><span class="up" style="margin:0 4px 0 0"></span>(+19.24%)</div></div>
<div class="vsep" style="left:674px"></div>
<div class="stat" style="left:693px"><div class="l">Exit Rate</div><div class="v">51.97%</div><div class="p">Previous: <b>53.47%</b><span class="dn"></span></div><div class="c" style="color:#a03048">(-2.80%)</div></div>
<div class="vsep" style="left:839px"></div>

<div class="abs" style="left:38px;top:630px;font-size:17.2px;font-weight:bold;color:#222">2873 Pages</div>

<div class="abs" style="left:33px;top:655px;width:1833px;height:42px;border:1px solid #ddd;background:#fafafa"></div>
<div class="abs" style="left:41px;top:668px;font-size:16px;color:#333">Top Pages</div>
<svg class="abs" style="left:1837px;top:668px" width="16" height="15" viewBox="0 0 16 15"><ellipse cx="8" cy="2.2" rx="7.3" ry="2.2" fill="#666"/><ellipse cx="8" cy="2.2" rx="5.8" ry="1" fill="#fafafa"/><path d="M0.7 2.8 Q1.5 4.5 6 8 L6 14 L10 14 L10 8 Q14.5 4.5 15.3 2.8 Q8 6 0.7 2.8Z" fill="#666"/></svg>

<table>
<tr><th class="l" style="width:1356px;padding-left:4px"><span class="sort"></span>Exit Page</th><th style="width:109px"><span class="sort"></span>Exits</th><th class="s" style="width:129px"><span class="caret"></span>Exits %</th><th style="width:109px"><span class="sort"></span>Page views</th><th style="width:129px"><span class="sort"></span>Page views %</th></tr>
<tr><td class="l">/</td><td>60,515</td><td class="s">65.72%</td><td>77,553</td><td>43.77%</td></tr>
<tr><td class="l">/about/</td><td>3,122</td><td class="s">3.39%</td><td>12,017</td><td>6.78%</td></tr>
<tr><td class="l">/testimonials/</td><td>1,903</td><td class="s">2.07%</td><td>2,363</td><td>1.33%</td></tr>
<tr><td class="l">/orlando/services/</td><td>1,608</td><td class="s">1.75%</td><td>4,018</td><td>2.27%</td></tr>
<tr><td class="l">/blog/</td><td>1,590</td><td class="s">1.73%</td><td>2,334</td><td>1.32%</td></tr>
<tr><td class="l">/contactus/</td><td>1,492</td><td class="s">1.62%</td><td>1,672</td><td>0.94%</td></tr>
</table>
</body></html>
